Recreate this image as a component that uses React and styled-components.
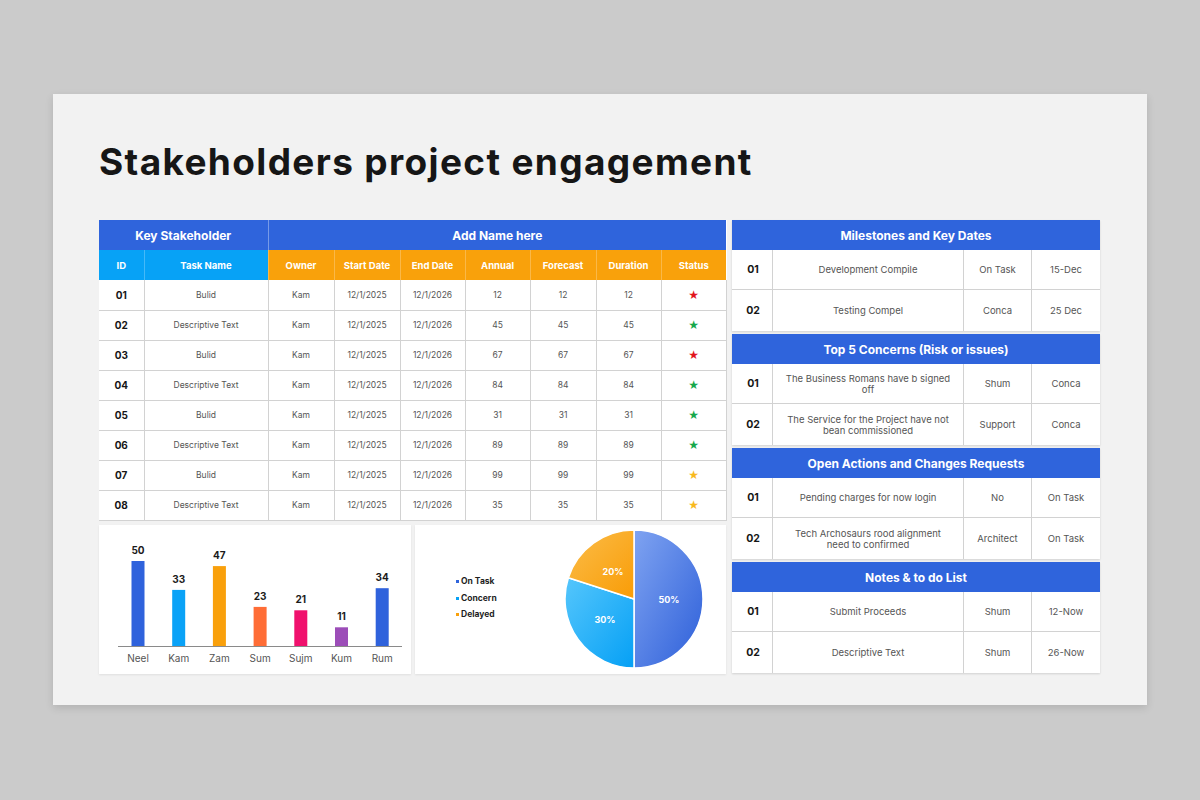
import React from 'react'
import styled, { createGlobalStyle } from 'styled-components'

const GlobalStyle = createGlobalStyle`
  html, body {
    margin: 0;
    padding: 0;
    background: #cbcbcb;
    font-family: Inter, "Noto Sans", sans-serif;
  }
  * { box-sizing: border-box; }
`

const BLUE = '#2f64dc'
const SKY = '#07a2f6'
const ORANGE = '#f9a10b'
const LINE = '#d2d2d2'

const tasks = [
  { id: '01', name: 'Bulid', v: 12, star: '#e2141b' },
  { id: '02', name: 'Descriptive Text', v: 45, star: '#17a84b' },
  { id: '03', name: 'Bulid', v: 67, star: '#e2141b' },
  { id: '04', name: 'Descriptive Text', v: 84, star: '#17a84b' },
  { id: '05', name: 'Bulid', v: 31, star: '#17a84b' },
  { id: '06', name: 'Descriptive Text', v: 89, star: '#17a84b' },
  { id: '07', name: 'Bulid', v: 99, star: '#f8b91d' },
  { id: '08', name: 'Descriptive Text', v: 35, star: '#f8b91d' },
]

const bars = [
  { label: 'Neel', value: 50, color: '#2f62dc' },
  { label: 'Kam', value: 33, color: '#0aa2f7' },
  { label: 'Zam', value: 47, color: '#f9a00b' },
  { label: 'Sum', value: 23, color: '#ff6d36' },
  { label: 'Sujm', value: 21, color: '#f0116d' },
  { label: 'Kum', value: 11, color: '#9c4db8' },
  { label: 'Rum', value: 34, color: '#2f62dc' },
]

const sections = [
  {
    title: 'Milestones and Key Dates',
    rows: [
      ['01', 'Development Compile', 'On Task', '15-Dec'],
      ['02', 'Testing Compel', 'Conca', '25 Dec'],
    ],
  },
  {
    title: 'Top 5 Concerns (Risk or issues)',
    rows: [
      ['01', 'The Business Romans have b signed off', 'Shum', 'Conca'],
      ['02', 'The Service for the Project have not bean commissioned', 'Support', 'Conca'],
    ],
  },
  {
    title: 'Open Actions and Changes Requests',
    rows: [
      ['01', 'Pending charges for now login', 'No', 'On Task'],
      ['02', 'Tech Archosaurs rood alignment need to confirmed', 'Architect', 'On Task'],
    ],
  },
  {
    title: 'Notes & to do List',
    rows: [
      ['01', 'Submit Proceeds', 'Shum', '12-Now'],
      ['02', 'Descriptive Text', 'Shum', '26-Now'],
    ],
  },
]

function BarChart() {
  const base = 121
  const scale = 1.7
  return (
    <svg width="312" height="149" viewBox="0 0 312 149">
      {bars.map((b, i) => {
        const cx = 39 + i * 40.7
        const h = b.value * scale
        return (
          <g key={b.label}>
            <rect x={cx - 6.5} y={base - h} width="13" height={h} fill={b.color} />
            <text x={cx} y={base - h - 7} textAnchor="middle" fontSize="10" fontWeight="700" fill="#1b1b1b" fontFamily="Inter, sans-serif">{b.value}</text>
            <text x={cx} y={base + 16} textAnchor="middle" fontSize="10" fill="#555" fontFamily="Inter, sans-serif">{b.label}</text>
          </g>
        )
      })}
      <line x1="19" y1={base + 0.5} x2="303" y2={base + 0.5} stroke="#8a8a8a" strokeWidth="1" />
    </svg>
  )
}

function slicePath(cx, cy, r, a0, a1) {
  const p = a => [cx + r * Math.sin(a), cy - r * Math.cos(a)]
  const [x0, y0] = p(a0)
  const [x1, y1] = p(a1)
  const large = a1 - a0 > Math.PI ? 1 : 0
  return `M${cx},${cy} L${x0},${y0} A${r},${r} 0 ${large} 1 ${x1},${y1} Z`
}

function PieChart() {
  const cx = 71
  const cy = 71
  const r = 69
  const T = Math.PI * 2
  return (
    <svg width="142" height="142" viewBox="0 0 142 142">
      <defs>
        <linearGradient id="gBlue" x1="0" y1="0" x2="1" y2="1">
          <stop offset="0" stopColor="#7fa3f1" />
          <stop offset="1" stopColor="#2d5fd9" />
        </linearGradient>
        <linearGradient id="gSky" x1="0" y1="0" x2="1" y2="1">
          <stop offset="0" stopColor="#55c6fc" />
          <stop offset="1" stopColor="#05a0f5" />
        </linearGradient>
        <linearGradient id="gOrange" x1="0" y1="0" x2="1" y2="1">
          <stop offset="0" stopColor="#fbbd4a" />
          <stop offset="1" stopColor="#f99c06" />
        </linearGradient>
      </defs>
      <path d={slicePath(cx, cy, r, 0, T * 0.5)} fill="url(#gBlue)" stroke="#fff" strokeWidth="1.5" />
      <path d={slicePath(cx, cy, r, T * 0.5, T * 0.8)} fill="url(#gSky)" stroke="#fff" strokeWidth="1.5" />
      <path d={slicePath(cx, cy, r, T * 0.8, T)} fill="url(#gOrange)" stroke="#fff" strokeWidth="1.5" />
      <g fontFamily="Inter, sans-serif" fontSize="9" fontWeight="700" fill="#fff" textAnchor="middle">
        <text x="106" y="75">50%</text>
        <text x="42" y="95">30%</text>
        <text x="50" y="47">20%</text>
      </g>
    </svg>
  )
}

function App() {
  return (
    <>
      <GlobalStyle />
      <Page>
        <Slide>
          <Title>Stakeholders project engagement</Title>
          <Board>
            <LeftColumn>
              <TaskTable>
                <colgroup>
                  {[45, 124, 66, 66, 65, 65, 66, 65, 65].map((w, i) => (
                    <col key={i} style={{ width: w }} />
                  ))}
                </colgroup>
                <thead>
                  <tr>
                    <GroupCell colSpan={2}>Key Stakeholder</GroupCell>
                    <GroupCell colSpan={7} divider>Add Name here</GroupCell>
                  </tr>
                  <tr>
                    <SubCell tone={SKY}>ID</SubCell>
                    <SubCell tone={SKY}>Task Name</SubCell>
                    {['Owner', 'Start Date', 'End Date', 'Annual', 'Forecast', 'Duration', 'Status'].map(h => (
                      <SubCell key={h} tone={ORANGE}>{h}</SubCell>
                    ))}
                  </tr>
                </thead>
                <tbody>
                  {tasks.map(t => (
                    <tr key={t.id}>
                      <IdCell>{t.id}</IdCell>
                      <Cell>{t.name}</Cell>
                      <Cell>Kam</Cell>
                      <Cell>12/1/2025</Cell>
                      <Cell>12/1/2026</Cell>
                      <Cell>{t.v}</Cell>
                      <Cell>{t.v}</Cell>
                      <Cell>{t.v}</Cell>
                      <Cell><Star color={t.star}>★</Star></Cell>
                    </tr>
                  ))}
                </tbody>
              </TaskTable>
              <ChartRow>
                <Card>
                  <BarChart />
                </Card>
                <PieCard>
                  <Legend>
                    <LegendItem dot={BLUE}>On Task</LegendItem>
                    <LegendItem dot={SKY}>Concern</LegendItem>
                    <LegendItem dot={ORANGE}>Delayed</LegendItem>
                  </Legend>
                  <PieChart />
                </PieCard>
              </ChartRow>
            </LeftColumn>
            <RightColumn>
              {sections.map(s => (
                <Section key={s.title}>
                  <SectionHead>{s.title}</SectionHead>
                  {s.rows.map((r, i) => (
                    <SectionRow key={r[0]} last={i === s.rows.length - 1}>
                      <SectionId>{r[0]}</SectionId>
                      <SectionText>{r[1]}</SectionText>
                      <SectionText>{r[2]}</SectionText>
                      <SectionText>{r[3]}</SectionText>
                    </SectionRow>
                  ))}
                </Section>
              ))}
            </RightColumn>
          </Board>
        </Slide>
      </Page>
    </>
  )
}

const Page = styled.div`
  width: 1200px;
  height: 800px;
  padding-top: 94px;
  display: flex;
  justify-content: center;
  align-items: flex-start;
`

const Slide = styled.div`
  width: 1094px;
  height: 611px;
  background: #f2f2f2;
  box-shadow: 0 3px 8px rgba(0, 0, 0, 0.12);
  padding: 45px 47px 0 46px;
`

const Title = styled.h1`
  margin: 0 0 35px;
  font-size: 37px;
  line-height: 46px;
  font-weight: 700;
  color: #161616;
  letter-spacing: 1.35px;
`

const Board = styled.div`
  display: grid;
  grid-template-columns: 627px 368px;
  gap: 6px;
`

const LeftColumn = styled.div`
  display: flex;
  flex-direction: column;
  gap: 4px;
`

const TaskTable = styled.table`
  width: 627px;
  table-layout: fixed;
  border-collapse: collapse;
  background: #fff;

  tr {
    height: 30px;
  }
`

const GroupCell = styled.th`
  background: ${BLUE};
  color: #fff;
  font-size: 12px;
  font-weight: 700;
  padding: 0;
  height: 30px;
  border-left: ${p => (p.divider ? '1px solid rgba(255,255,255,0.35)' : 'none')};
`

const SubCell = styled.th`
  background: ${p => p.tone};
  color: #fff;
  font-size: 9.5px;
  font-weight: 700;
  padding: 0;
  height: 30px;
  border-left: 1px solid rgba(255, 255, 255, 0.25);
  &:first-child { border-left: none; }
`

const Cell = styled.td`
  padding: 0;
  text-align: center;
  font-size: 8.5px;
  color: #555;
  border: 1px solid ${LINE};
  border-top: none;
`

const IdCell = styled(Cell)`
  font-size: 10px;
  font-weight: 700;
  color: #161616;
  border-left: none;
`

const Star = styled.span`
  color: ${p => p.color};
  font-size: 12px;
  line-height: 1;
  font-family: "DejaVu Sans", sans-serif;
`

const ChartRow = styled.div`
  display: grid;
  grid-template-columns: 312px 311px;
  gap: 4px;
  height: 149px;
`

const Card = styled.div`
  background: #fff;
  box-shadow: 0 1px 2px rgba(0, 0, 0, 0.08);
  display: flex;
`

const PieCard = styled(Card)`
  align-items: center;
  padding-left: 41px;
  gap: 66px;
`

const Legend = styled.div`
  display: flex;
  flex-direction: column;
  gap: 5.5px;
  width: 41px;
  margin-top: -2px;
`

const LegendItem = styled.div`
  display: flex;
  align-items: center;
  gap: 2px;
  font-size: 8.5px;
  font-weight: 700;
  color: #1f1f1f;
  white-space: nowrap;
  line-height: 11px;

  &::before {
    content: '';
    width: 3px;
    height: 3px;
    background: ${p => p.dot};
  }
`

const RightColumn = styled.div`
  display: flex;
  flex-direction: column;
  gap: 3px;
`

const Section = styled.div`
  background: #fff;
  box-shadow: 0 1px 2px rgba(0, 0, 0, 0.14);
`

const SectionHead = styled.div`
  height: 30px;
  background: ${BLUE};
  color: #fff;
  font-size: 12px;
  font-weight: 700;
  display: flex;
  align-items: center;
  justify-content: center;
`

const SectionRow = styled.div`
  display: grid;
  grid-template-columns: 40px 191px 68px 69px;
  height: ${p => (p.last ? '41px' : '40px')};
  border-bottom: ${p => (p.last ? 'none' : `1px solid ${LINE}`)};
`

const SectionText = styled.div`
  display: flex;
  align-items: center;
  justify-content: center;
  text-align: center;
  padding: 0 10px;
  font-size: 9.5px;
  line-height: 11px;
  color: #555;
  border-left: 1px solid ${LINE};
`

const SectionId = styled(SectionText)`
  border-left: none;
  font-size: 10.5px;
  font-weight: 700;
  color: #161616;
  padding: 0 0 0 2px;
`

export default App
